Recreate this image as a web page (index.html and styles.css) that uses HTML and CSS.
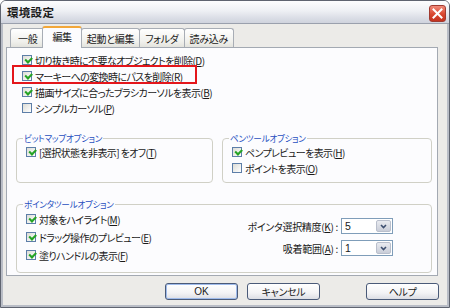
FILE: index.html
```html
<!DOCTYPE html>
<html lang="ja">
<head>
<meta charset="utf-8">
<title>環境設定</title>
<link rel="stylesheet" href="styles.css">
</head>
<body>
<div class="window">
  <div class="titlebar">
    <span class="title">環境設定</span>
    <span class="close"><svg width="11" height="11" viewBox="0 0 11 11"><path d="M1.5 1.5L9.5 9.5M9.5 1.5L1.5 9.5" stroke="#fff" stroke-width="2" stroke-linecap="square"/></svg></span>
  </div>
  <div class="client">
    <div class="tabs">
      <div class="tab t1">一般</div>
      <div class="tab active">編集</div>
      <div class="tab">起動と編集</div>
      <div class="tab">フォルダ</div>
      <div class="tab">読み込み</div>
    </div>
    <div class="panel">
      <div class="checklist">
        <div class="cb"><span class="box on"></span>切り抜き時に不要なオブジェクトを削除(<u>D</u>)</div>
        <div class="cb"><span class="box on"></span>マーキーへの変換時にパスを削除(<u>R</u>)</div>
        <div class="cb"><span class="box on"></span>描画サイズに合ったブラシカーソルを表示(<u>B</u>)</div>
        <div class="cb"><span class="box"></span>シンプルカーソル(<u>P</u>)</div>
      </div>
      <div class="mark"></div>
      <div class="grouprow">
        <fieldset class="group bitmap">
          <legend>ビットマップオプション</legend>
          <div class="cb"><span class="box on"></span>[選択状態を非表示] をオフ(<u>T</u>)</div>
        </fieldset>
        <fieldset class="group pen">
          <legend>ペンツールオプション</legend>
          <div class="cb"><span class="box on"></span>ペンプレビューを表示(<u>H</u>)</div>
          <div class="cb"><span class="box"></span>ポイントを表示(<u>O</u>)</div>
        </fieldset>
      </div>
      <fieldset class="group pointer">
        <legend>ポインタツールオプション</legend>
        <div class="pcols">
          <div class="pchecks">
            <div class="cb tall"><span class="box on"></span>対象をハイライト(<u>M</u>)</div>
            <div class="cb tall"><span class="box on"></span>ドラッグ操作のプレビュー(<u>E</u>)</div>
            <div class="cb tall"><span class="box on"></span>塗りハンドルの表示(<u>F</u>)</div>
          </div>
          <div class="pfields">
            <div class="field"><span class="flabel">ポインタ選択精度(<u>K</u>) :</span><span class="select"><span class="val">5</span><span class="drop"><svg width="7" height="5" viewBox="0 0 7 5"><path d="M1 1L3.5 3.5L6 1" fill="none" stroke="#3d4f70" stroke-width="1.6"/></svg></span></span></div>
            <div class="field"><span class="flabel">吸着範囲(<u>A</u>) :</span><span class="select"><span class="val">1</span><span class="drop"><svg width="7" height="5" viewBox="0 0 7 5"><path d="M1 1L3.5 3.5L6 1" fill="none" stroke="#3d4f70" stroke-width="1.6"/></svg></span></span></div>
          </div>
        </div>
      </fieldset>
    </div>
    <div class="buttons">
      <button class="btn default">OK</button>
      <button class="btn">キャンセル</button>
      <button class="btn help">ヘルプ</button>
    </div>
  </div>
</div>
</body>
</html>
```

FILE: styles.css
```css
* { box-sizing: border-box; }
html, body { margin: 0; padding: 0; }
body {
  width: 450px;
  height: 308px;
  overflow: hidden;
  font-family: "Noto Sans CJK JP", "Noto Sans", sans-serif;
  font-size: 10px;
  font-feature-settings: "palt";
  color: #1a1a1a;
  background: #ffffff;
}
.window {
  width: 450px;
  height: 308px;
  border: 1px solid #5f6470;
  border-radius: 6px 6px 0 0;
  display: flex;
  flex-direction: column;
  background: #ecebe8;
  overflow: hidden;
}
.titlebar {
  height: 23px;
  flex: none;
  display: flex;
  align-items: center;
  justify-content: space-between;
  padding: 0 3px 0 6px;
  background: linear-gradient(#fdfdfe 0%, #eef0f4 45%, #dcdfe7 75%, #cfd3dd 100%);
  border-bottom: 1px solid #9aa0ad;
}
.title {
  font-size: 11.5px;
  font-weight: bold;
  color: #1a1a1a;
  letter-spacing: 0.3px;
}
.close {
  width: 17px;
  height: 17px;
  margin-top: 2px;
  border-radius: 3px;
  border: 1px solid #a03a30;
  background: linear-gradient(#f08a7a, #d9472f 55%, #c3321f);
  display: flex;
  align-items: center;
  justify-content: center;
}
.client {
  flex: 1;
  display: flex;
  flex-direction: column;
  border-style: solid;
  border-color: #b9bdc6;
  border-width: 0 2px 2px 2px;
}
.tabs {
  display: flex;
  align-items: flex-end;
  margin-left: 7px;
  height: 22px;
  margin-top: 1px;
  position: relative;
  z-index: 1;
}
.tab {
  height: 19px;
  padding: 0 5px;
  display: flex;
  align-items: center;
  border: 1px solid #a8adb5;
  border-bottom: none;
  border-radius: 3px 3px 0 0;
  background: linear-gradient(#ffffff, #f0f0ec 70%, #e3e3dd);
  margin-right: -1px;
  font-size: 10px;
  letter-spacing: -0.3px;
}
.tab.t1 { padding: 0 7px; }
.tab.active {
  height: 22px;
  margin: 0 -1px 0 -2px;
  padding: 0 9px 3px;
  background: #fcfcfe;
  border-top: 2px solid #f2a73a;
  border-color: #a8adb5;
  border-top-color: #f2a73a;
  position: relative;
  top: 1px;
  z-index: 2;
}
.panel {
  position: relative;
  margin-left: 3px;
  width: 432px;
  height: 229px;
  border: 1px solid #a3a9b2;
  background: #fcfcfe;
  padding: 4px 5px 0 9px;
}
.checklist { padding-left: 6px; }
.cb {
  display: flex;
  align-items: center;
  height: 16px;
  white-space: nowrap;
  letter-spacing: -0.6px;
}
.cb.tall { height: 18px; }
.cb u { text-decoration: underline; text-underline-offset: 1px; }
.box {
  width: 10px;
  height: 10px;
  flex: none;
  margin-right: 3px;
  border: 1px solid #5d7ea8;
  background: linear-gradient(135deg, #dcdcd6, #ffffff);
  position: relative;
}
.box.on::after {
  content: "";
  position: absolute;
  left: 1.5px;
  top: 1px;
  width: 5px;
  height: 2.5px;
  border-left: 2px solid #24a324;
  border-bottom: 2px solid #24a324;
  transform: rotate(-45deg);
}
.mark {
  position: absolute;
  left: 5px;
  top: 17px;
  width: 185px;
  height: 19px;
  border: 2px solid #e4161b;
}
.grouprow {
  display: flex;
  gap: 9px;
  margin-top: 16px;
}
.group {
  margin: 0;
  border: 1px solid #d0d0c6;
  border-radius: 4px;
  padding: 0 6px 6px 9px;
  min-width: 0;
}
.group legend {
  color: #1f4fbf;
  font-size: 8.6px;
  line-height: 12px;
  letter-spacing: -0.3px;
  padding: 0 1px;
  margin-left: -3px;
}
.bitmap { width: 197px; }
.pen { width: 210px; }
.pointer {
  margin-top: 15px;
  width: 416px;
  padding-bottom: 8px;
}
.pcols {
  display: flex;
  justify-content: space-between;
}
.pfields {
  padding-top: 5px;
  margin-right: 32px;
  display: flex;
  flex-direction: column;
  align-items: flex-end;
}
.field {
  height: 22px;
  display: flex;
  align-items: center;
  letter-spacing: -0.3px;
}
.flabel { margin-right: 3px; white-space: nowrap; }
.select {
  width: 52px;
  height: 16px;
  border: 1px solid #7f9db9;
  background: #fff;
  display: flex;
  align-items: stretch;
  justify-content: space-between;
}
.val { padding-left: 3px; line-height: 14px; font-family: "Liberation Sans", sans-serif; font-size: 10.5px; }
.drop {
  width: 15px;
  margin: 1px;
  border-radius: 2px;
  background: linear-gradient(#e9ebf0, #c9cdd8);
  border: 1px solid #b9bfcc;
  display: flex;
  align-items: center;
  justify-content: center;
}
.buttons {
  display: flex;
  justify-content: flex-end;
  margin-top: 7px;
  padding-right: 8px;
}
.btn {
  width: 73px;
  height: 17px;
  padding: 0;
  margin-left: 9px;
  font-family: inherit;
  font-size: 10px;
  font-feature-settings: "palt";
  letter-spacing: -0.3px;
  color: #1a1a1a;
  border: 1px solid #4a5a78;
  border-radius: 3px;
  background: linear-gradient(#ffffff, #f3f3f5 60%, #dcdee4);
  line-height: 14px;
}
.btn.default {
  box-shadow: inset 0 0 0 1px #9fbbeb;
  font-family: "Liberation Sans", sans-serif;
  letter-spacing: 0;
}
.btn.help { margin-left: 46px; }
```
